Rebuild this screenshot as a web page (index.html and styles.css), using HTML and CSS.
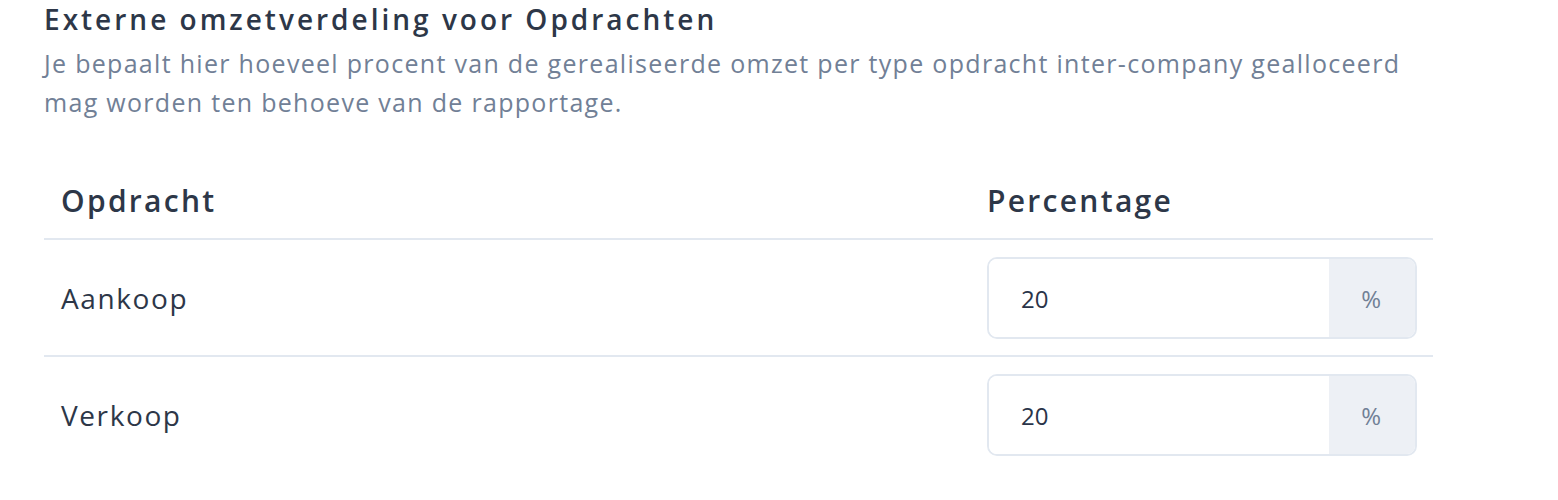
FILE: index.html
```html
<!DOCTYPE html>
<html lang="nl">
<head>
    <meta charset="UTF-8">
    <meta name="viewport" content="width=device-width, initial-scale=1.0">
    <title>Externe omzetverdeling</title>
    <link rel="stylesheet" href="styles.css">
</head>
<body>
    <section class="settings">
        <h2 class="settings-title">Externe omzetverdeling voor Opdrachten</h2>
        <p class="settings-desc">Je bepaalt hier hoeveel procent van de gerealiseerde omzet per type opdracht inter-company gealloceerd mag worden ten behoeve van de rapportage.</p>

        <table class="split-table">
            <thead>
                <tr>
                    <th>Opdracht</th>
                    <th class="col-pct">Percentage</th>
                </tr>
            </thead>
            <tbody>
                <tr>
                    <td>Aankoop</td>
                    <td class="col-pct">
                        <div class="pct-input">
                            <input type="text" value="20">
                            <span class="pct-addon">%</span>
                        </div>
                    </td>
                </tr>
                <tr>
                    <td>Verkoop</td>
                    <td class="col-pct">
                        <div class="pct-input">
                            <input type="text" value="20">
                            <span class="pct-addon">%</span>
                        </div>
                    </td>
                </tr>
            </tbody>
        </table>
    </section>
</body>
</html>
```

FILE: styles.css
```css
body {
    margin: 0;
    padding: 0 0 0 44px;
    font-family: "Open Sans", Lato, sans-serif;
    background: #ffffff;
    color: #2d3748;
}
.settings {
    width: 1389px;
}
.settings-title {
    margin: 0;
    padding-top: 0;
    font-size: 28px;
    font-weight: 600;
    letter-spacing: 3px;
    line-height: 38px;
    color: #2d3748;
}
.settings-desc {
    margin: 6px 0 0 0;
    width: 1389px;
    font-size: 25px;
    letter-spacing: 1.3px;
    line-height: 39px;
    color: #718096;
}
.split-table {
    width: 100%;
    margin-top: 58px;
    border-collapse: collapse;
}
.split-table th {
    text-align: left;
    font-size: 30px;
    font-weight: 600;
    letter-spacing: 2.3px;
    padding: 0 16px 17px 17px;
    height: 40px;
    border-bottom: 2px solid #e2e8f0;
}
.split-table td {
    font-size: 28px;
    letter-spacing: 1.6px;
    padding: 17px 16px 16px 17px;
    border-bottom: 2px solid #e2e8f0;
}
.split-table tbody tr:last-child td {
    border-bottom: none;
}
.split-table .col-pct {
    width: 430px;
    padding-left: 16px;
}
.pct-input {
    display: flex;
    height: 82px;
    border: 2px solid #e2e8f0;
    border-radius: 10px;
    overflow: hidden;
    box-sizing: border-box;
}
.pct-input input {
    flex: 1;
    min-width: 0;
    border: none;
    outline: none;
    padding: 0 0 0 32px;
    font-family: inherit;
    font-size: 24px;
    color: #2a3449;
    background: #ffffff;
}
.pct-input .pct-addon {
    width: 86px;
    display: flex;
    align-items: center;
    justify-content: center;
    background: #edf0f5;
    color: #718096;
    font-size: 24px;
}
```
